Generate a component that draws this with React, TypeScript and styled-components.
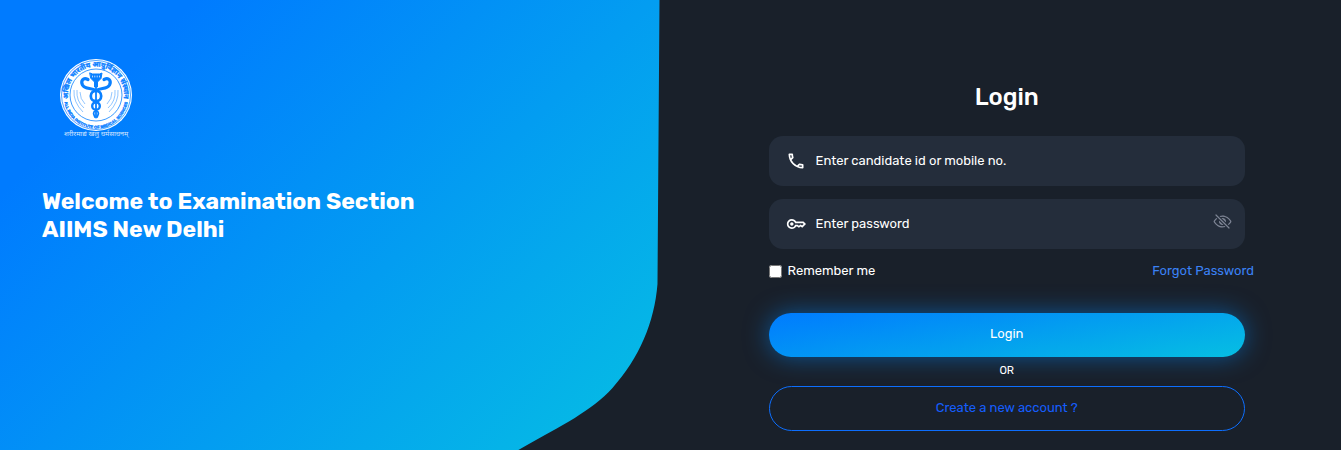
import React, { useState } from "react";
import styled, { createGlobalStyle } from "styled-components";
import { MdOutlinePhone } from "react-icons/md";
import { IoEyeOffOutline } from "react-icons/io5";

const GlobalStyle = createGlobalStyle`
  * { box-sizing: border-box; }
  body {
    margin: 0;
    background: #19202a;
    color: #ffffff;
    font-family: Rubik, Roboto, "Liberation Sans", sans-serif;
    font-size: 13px;
    line-height: 18px;
  }
  button, input { font: inherit; }
`;

const Page = styled.div`
  display: grid;
  grid-template-columns: 1fr 1fr;
  min-height: 100vh;
`;

const Welcome = styled.section`
  position: relative;
  padding: 56px 42px;
`;

const Backdrop = styled.svg`
  position: absolute;
  inset: 0;
  width: 100%;
  height: 100%;
  z-index: -1;
`;

const Emblem = styled.svg`
  display: block;
  width: 84px;
  height: 84px;
  margin-left: 12px;
  font-family: "Noto Sans Devanagari", "Noto Sans", "Liberation Sans", sans-serif;
`;

const WelcomeTitle = styled.h1`
  margin: 47px 0 0;
  font-size: 23px;
  line-height: 28px;
  font-weight: 700;
`;

const FormSide = styled.main`
  padding: 82px 96px 19px 98px;
`;

const Form = styled.form`
  display: flex;
  flex-direction: column;
`;

const FormTitle = styled.h2`
  margin: 0 0 24px;
  font-size: 24px;
  line-height: 30px;
  font-weight: 500;
  text-align: center;
`;

const Field = styled.label`
  display: flex;
  align-items: center;
  gap: 10px;
  height: 50px;
  margin-bottom: 13px;
  padding: 0 13px 0 17px;
  border-radius: 14px;
  background: #242d3b;
`;

const Input = styled.input`
  flex: 1;
  min-width: 0;
  padding: 0;
  border: 0;
  outline: 0;
  background: transparent;
  color: #ffffff;
  &::placeholder { color: #ffffff; opacity: 1; }
`;

const IconButton = styled.button`
  display: flex;
  padding: 0 0 6px;
  border: 0;
  background: none;
  color: #7d8494;
`;

const Options = styled.div`
  display: flex;
  justify-content: space-between;
  margin-right: -9px;
`;

const Remember = styled.label`
  display: flex;
  align-items: center;
  gap: 6px;
`;

const Checkbox = styled.input`
  width: 13px;
  height: 13px;
  margin: 0;
`;

const Forgot = styled.a`
  color: #3b82f6;
  text-decoration: none;
`;

const PillButton = styled.button<{ $outlined?: boolean }>`
  height: ${(p) => (p.$outlined ? 45 : 44)}px;
  padding: 0 0 2px;
  border: ${(p) => (p.$outlined ? "1px solid #0d6efd" : "0")};
  border-radius: 24px;
  color: ${(p) => (p.$outlined ? "#155dfc" : "#ffffff")};
  background: ${(p) => (p.$outlined ? "transparent" : "linear-gradient(170deg, #007bff, #06bfe2)")};
  box-shadow: ${(p) => (p.$outlined ? "none" : "0 0 24px rgba(0, 140, 255, 0.5)")};
  margin-top: ${(p) => (p.$outlined ? 6 : 33)}px;
`;

const Or = styled.span`
  margin-top: 5px;
  font-size: 11px;
  text-align: center;
`;

function AiimsEmblem() {
  return (
    <Emblem viewBox="0 0 84 84" role="img" aria-label="AIIMS New Delhi">
      <defs>
        <path id="topArc" d="M14.2 42A28 28 0 1 1 69.8 42" />
        <path id="bottomArc" d="M10 40.5A32 32 0 0 0 74 40.500" />
      </defs>
      <circle cx="42" cy="39" r="36" fill="#fff" />
      <circle cx="42" cy="39" r="34.5" fill="none" stroke="#0a80ff" strokeWidth=".7" />
      <circle cx="42" cy="39" r="26" fill="none" stroke="#0a80ff" strokeWidth=".8" />
      <g fill="#0a80ff" stroke="#0a80ff" strokeWidth=".35" fontWeight="700" textAnchor="middle">
        <text fontSize="7">
          <textPath href="#topArc" startOffset="50%">अखिल भारतीय आयुर्विज्ञान संस्थान</textPath>
        </text>
        <text fontSize="4" fontFamily="Liberation Sans, sans-serif">
          <textPath href="#bottomArc" startOffset="50%">ALL INDIA INSTITUTE OF MEDICAL SCIENCES</textPath>
        </text>
      </g>
      <g fill="none" stroke="#0a80ff" strokeWidth=".6" opacity=".75">
        <path d="M20 34Q19 46 29 56M23 34Q22 45 30 52M26 36Q26 43 31 48" />
        <path d="M64 34Q65 46 55 56M61 34Q62 45 54 52M58 36Q58 43 53 48" />
      </g>
      <g fill="none" stroke="#0a80ff" strokeLinecap="round" strokeLinejoin="round">
        <path fill="#0a80ff" strokeWidth="1" d="M36 17L38.500 18H45.500L48 17L47 22.500L43.500 26V31H40.500V26L37 22.500Z" />
        <path strokeWidth="3.200" d="M34 23.500C29 21 26.500 25 28.500 29C31 33.500 37 31.500 42 34.500M50 23.500C55 21 57.500 25 55.500 29C53 33.500 47 31.500 42 34.500" />
        <circle cx="42" cy="40" r="5.200" strokeWidth="2.700" />
        <circle cx="42" cy="50" r="3.800" strokeWidth="2.400" />
        <path strokeWidth="1.800" d="M42 54.500C38 56 40 59 41 61M42 54.500C46 56 44 59 43 61" />
        <path strokeWidth="1.800" d="M42 26V61.500" />
        <path stroke="#fff" strokeWidth=".7" d="M38.500 20V21M40.800 20V21M43.200 20V21M45.500 20V21" />
      </g>
      <text x="42" y="80" fontSize="7" fill="#fff" opacity=".8" textAnchor="middle">शरीरमाद्यं खलु धर्मसाधनम्</text>
    </Emblem>
  );
}

function KeyIcon() {
  return (
    <svg width="20" height="20" viewBox="0 0 24 24" fill="currentColor" aria-hidden="true">
      <path d="M7 14q-.825 0-1.412-.587T5 12t.588-1.412T7 10t1.413.588T9 12t-.587 1.413T7 14m0 4q-2.5 0-4.25-1.75T1 12t1.750-4.250T7 6q1.675 0 3.038.825T12.200 9H21l3 3-4.500 4.500-2-1.500-2 1.500-2.125-1.500H12.200q-.8 1.350-2.162 2.175T7 18m0-2q1.400 0 2.463-.85T10.875 13H14l1.450 1.025L17.500 12.500l1.775 1.375L21.150 12l-1-1h-9.275q-.35-1.300-1.412-2.150T7 8q-1.650 0-2.825 1.175T3 12t1.175 2.825T7 16" />
    </svg>
  );
}

export default function App() {
  const [visible, setVisible] = useState(false);
  return (
    <Page>
      <GlobalStyle />
      <Welcome>
        <Backdrop viewBox="0 0 670 450" preserveAspectRatio="none" aria-hidden="true">
          <defs>
            <linearGradient id="sky" gradientUnits="userSpaceOnUse" x1="97" y1="97" x2="555" y2="555">
              <stop stopColor="#007bff" />
              <stop offset="1" stopColor="#06bfe3" />
            </linearGradient>
          </defs>
          <path fill="url(#sky)" d="M0 0H659L657 284C654 322 639 358 612 388C591 411 564 424 518 450H0Z" />
        </Backdrop>
        <AiimsEmblem />
        <WelcomeTitle>
          Welcome to Examination Section
          <br />
          AIIMS New Delhi
        </WelcomeTitle>
      </Welcome>
      <FormSide>
        <Form onSubmit={(e) => e.preventDefault()}>
          <FormTitle>Login</FormTitle>
          <Field>
            <MdOutlinePhone size={20} />
            <Input aria-label="Candidate id or mobile number" placeholder="Enter candidate id or mobile no." />
          </Field>
          <Field>
            <KeyIcon />
            <Input aria-label="Password" type={visible ? "text" : "password"} placeholder="Enter password" />
            <IconButton type="button" aria-label="Show password" onClick={() => setVisible(!visible)}>
              <IoEyeOffOutline size={19} />
            </IconButton>
          </Field>
          <Options>
            <Remember>
              <Checkbox type="checkbox" />
              Remember me
            </Remember>
            <Forgot href="#forgot">Forgot Password</Forgot>
          </Options>
          <PillButton type="submit">Login</PillButton>
          <Or>OR</Or>
          <PillButton type="button" $outlined>Create a new account ?</PillButton>
        </Form>
      </FormSide>
    </Page>
  );
}
